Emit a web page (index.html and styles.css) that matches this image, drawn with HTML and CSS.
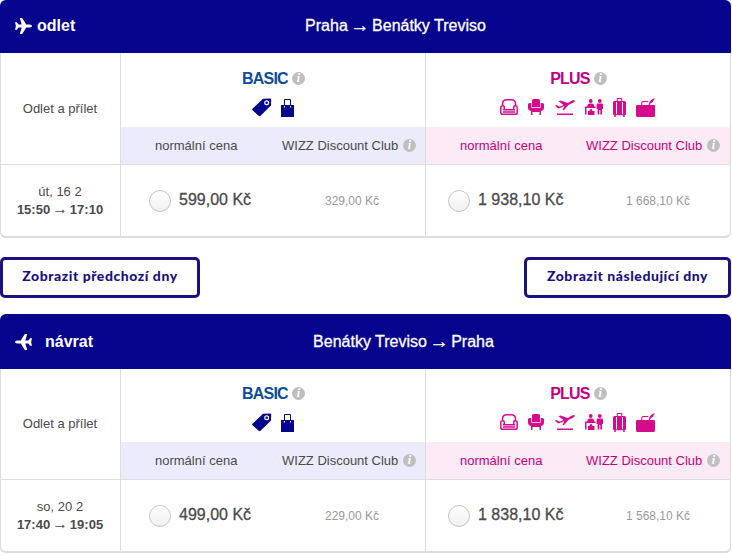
FILE: index.html
```html
<!DOCTYPE html>
<html lang="cs">
<head>
  <meta charset="UTF-8" />
  <meta name="viewport" content="width=device-width, initial-scale=1.0"/>
  <title>Výběr letu</title>
  <link rel="stylesheet" href="styles.css">
</head>
<body>
  <svg width="0" height="0" class="sprite">
    <symbol id="plane" viewBox="0 0 18 17">
      <path d="M0 4.500h2l1.700 2.500h3.400L5 0h2.600l4.300 7h3.600c1.500 0 2.500.8 2.500 1.500s-1 1.500-2.500 1.500h-3.600l-4.300 7H5l2.100-7H3.700L2 12.500H0l.9-4z"/>
    </symbol>
    <symbol id="tag" viewBox="0 0 20 19">
      <path fill-rule="evenodd" d="M11 .8 18 .5q1.300 0 1.200 1.300L19 7.500 8.500 17.800q-.9.800-1.900 0L.6 12.300q-.9-.9.100-1.800zM14.700 2.200a2.500 2.500 0 1 0 0 5 2.500 2.500 0 0 0 0-5zm0 1.200a1.300 1.300 0 1 1 0 2.600 1.300 1.300 0 0 1 0-2.600z"/>
    </symbol>
    <symbol id="bag" viewBox="0 0 13 18">
      <path fill-rule="evenodd" d="M0 6h3V1q0-1 1-1h5q1 0 1 1v5h3v12H0zM4 1v5h5V1zM3 7v1.500h1V7zM9 7v1.500h1V7z"/>
    </symbol>
    <symbol id="sofa" viewBox="0 0 18 16">
      <path fill="none" stroke="currentColor" stroke-width="1.500" d="M2.500 6.500V5Q2.500.8 7 .8h4q4.500 0 4.500 4.200v1.500M4.300 11V8.500Q4.200 6.600 2.400 6.600.8 6.700.8 8.600v4.800q0 1.800 1.800 1.800h12.800q1.800 0 1.800-1.800V8.600q0-1.900-1.600-2-1.800 0-1.900 1.900V11M3 10.800h12M3 13h12"/>
    </symbol>
    <symbol id="seat" viewBox="0 0 16 16">
      <path d="M4 1.500Q4 0 5.500 0h5Q12 0 12 1.500V8H4zM0 5.500Q0 4 1.500 4H3.300v4.700h9.400V4h1.800Q16 4 16 5.500v3Q16 11.500 13 12v4h-1.500v-3h-7v3H3v-4Q0 11.500 0 8.500z"/>
    </symbol>
    <symbol id="takeoff" viewBox="0 0 20 16">
      <path d="M0 6.500 1.500 6l3 1.700 4-1.700L3.500 2.200l2-.7 7.200 2.500L17 1.500q2.500-1 2.800.2.200 1-2.300 2.300l-4 2L9 11H7.500l2-4-4.500 2Q3.500 9.500 2.500 9zM2 14.500h16V16H2z"/>
    </symbol>
    <symbol id="desk" viewBox="0 0 18 16">
      <circle cx="5.700" cy="2" r="1.900"/>
      <circle cx="14.800" cy="2" r="1.900"/>
      <path d="M2.300 7.500Q2.300 4.500 5 4.500h1.500Q9.200 4.500 9.200 7.500h1.300V9h-9v6.500H0v-8zM3 12h1.500q0-2 1.500-2t1.500 2H9.500v4H3zM12.700 4.500h4.200q1.100 0 1.100 1.300V10h-1v5.500h-1.700V11h-1v4.500h-1.700V10h-1V5.800q0-1.300 1.100-1.300z"/>
    </symbol>
    <symbol id="suitcase" viewBox="0 0 13 19">
      <path fill-rule="evenodd" d="M1.500 3H3.700V1.300Q3.700 0 5 0h3q1.300 0 1.300 1.300V3h2.200Q13 3 13 4.500v11q0 1.500-1.300 1.700V19h-1.500v-1.700H2.800V19H1.300v-1.800Q0 17 0 15.500v-11Q0 3 1.500 3zM4.800 1v2h3.400V1zM3 4v12.300h1V4zm6 0v12.300h1V4z"/>
    </symbol>
    <symbol id="holdall" viewBox="0 0 20 19">
      <path fill-rule="evenodd" d="M1.200 7H5.200V5Q5.200 3 7.200 3h4.600l1 1H7.500q-1.200 0-1.200 1.200V7h6.200l1-3 2-2.500L17 1l1-1 .7.700-1 1.200-.7 1.800-2.300 1.500-.9 1.800h4q1.200 0 1.200 1.200v9.300Q19 19 17.500 19h-16Q0 19 0 17.500V8.200Q0 7 1.200 7z"/>
    </symbol>
  </svg>

  <section class="flight">
    <div class="flight-header">
      <div class="direction"><svg class="plane"><use href="#plane"/></svg>odlet</div>
      <div class="route">Praha <span class="arrow">→</span> Benátky Treviso</div>
    </div>
    <div class="row row-head">
      <div class="times">Odlet a přílet</div>
      <div class="fare basic">
        <div class="fare-name"><b>BASIC</b><i class="info">i</i></div>
        <div class="icons">
          <svg class="i-tag"><use href="#tag"/></svg>
          <svg class="i-bag"><use href="#bag"/></svg>
        </div>
        <div class="fare-types"><span class="normal">normální cena</span><span class="club">WIZZ Discount Club</span><i class="info">i</i></div>
      </div>
      <div class="fare plus">
        <div class="fare-name"><b>PLUS</b><i class="info">i</i></div>
        <div class="icons">
          <svg class="i-sofa"><use href="#sofa"/></svg>
          <svg class="i-seat"><use href="#seat"/></svg>
          <svg class="i-takeoff"><use href="#takeoff"/></svg>
          <svg class="i-desk"><use href="#desk"/></svg>
          <svg class="i-suitcase"><use href="#suitcase"/></svg>
          <svg class="i-holdall"><use href="#holdall"/></svg>
        </div>
        <div class="fare-types"><span class="normal">normální cena</span><span class="club">WIZZ Discount Club</span><i class="info">i</i></div>
      </div>
    </div>
    <div class="row row-price">
      <div class="times"><span>út, 16 2</span><strong>15:50 <span class="arrow">→</span> 17:10</strong></div>
      <div class="price"><span class="radio"></span><span class="amount">599,00 Kč</span><span class="discount">329,00 Kč</span></div>
      <div class="price price-plus"><span class="radio"></span><span class="amount">1 938,10 Kč</span><span class="discount">1 668,10 Kč</span></div>
    </div>
  </section>

  <div class="day-nav">
    <button class="prev">Zobrazit předchozí dny</button>
    <button class="next">Zobrazit následující dny</button>
  </div>

  <section class="flight return">
    <div class="flight-header">
      <div class="direction"><svg class="plane"><use href="#plane"/></svg>návrat</div>
      <div class="route">Benátky Treviso <span class="arrow">→</span> Praha</div>
    </div>
    <div class="row row-head">
      <div class="times">Odlet a přílet</div>
      <div class="fare basic">
        <div class="fare-name"><b>BASIC</b><i class="info">i</i></div>
        <div class="icons">
          <svg class="i-tag"><use href="#tag"/></svg>
          <svg class="i-bag"><use href="#bag"/></svg>
        </div>
        <div class="fare-types"><span class="normal">normální cena</span><span class="club">WIZZ Discount Club</span><i class="info">i</i></div>
      </div>
      <div class="fare plus">
        <div class="fare-name"><b>PLUS</b><i class="info">i</i></div>
        <div class="icons">
          <svg class="i-sofa"><use href="#sofa"/></svg>
          <svg class="i-seat"><use href="#seat"/></svg>
          <svg class="i-takeoff"><use href="#takeoff"/></svg>
          <svg class="i-desk"><use href="#desk"/></svg>
          <svg class="i-suitcase"><use href="#suitcase"/></svg>
          <svg class="i-holdall"><use href="#holdall"/></svg>
        </div>
        <div class="fare-types"><span class="normal">normální cena</span><span class="club">WIZZ Discount Club</span><i class="info">i</i></div>
      </div>
    </div>
    <div class="row row-price">
      <div class="times"><span>so, 20 2</span><strong>17:40 <span class="arrow">→</span> 19:05</strong></div>
      <div class="price"><span class="radio"></span><span class="amount">499,00 Kč</span><span class="discount">229,00 Kč</span></div>
      <div class="price price-plus"><span class="radio"></span><span class="amount">1 838,10 Kč</span><span class="discount">1 568,10 Kč</span></div>
    </div>
  </section>
</body>
</html>
```
FILE: styles.css
```css
* {
  box-sizing: border-box;
}

body {
  margin: 0;
  background: #fff;
  color: #4a4a4a;
  font-family: "Liberation Sans", Arial, sans-serif;
  font-size: 13px;
  overflow: hidden;
}

.sprite {
  display: block;
}

svg {
  flex: none;
  fill: currentColor;
}

.flight {
  width: 731px;
  border-radius: 6px;
  overflow: hidden;
  box-shadow: inset 0 0 0 1px #ddd, inset 0 -2px 0 #ddd;
}

.flight-header {
  display: flex;
  align-items: center;
  height: 53px;
  padding: 0 0 2px 15px;
  background: #06038d;
  color: #fff;
  font-size: 16px;
}

.direction {
  display: flex;
  align-items: center;
  width: 106px;
  gap: 5px;
  font-weight: bold;
}

.plane {
  width: 17px;
  height: 16px;
}

.route {
  width: 549px;
  text-align: center;
  -webkit-text-stroke: 0.3px #fff;
}

.arrow {
  margin: 0 -0.1em;
  font-size: 1.2em;
  font-weight: normal;
  line-height: 0;
  vertical-align: -1px;
}

.row {
  display: grid;
  grid-template-columns: 121px 305px 305px;
}

.row > div {
  border-right: 1px solid #ddd;
}

.row-head {
  height: 112px;
  border-bottom: 1px solid #ddd;
}

.row-price {
  height: 73px;
}

.times {
  display: flex;
  flex-direction: column;
  align-items: center;
  justify-content: center;
  line-height: 18px;
}

.row-price .times {
  padding-bottom: 1px;
}

.times .arrow {
  vertical-align: 0;
}

.fare {
  display: flex;
  flex-direction: column;
  align-items: center;
}

.fare-name {
  display: flex;
  align-items: center;
  gap: 4px;
  height: 18px;
  margin-top: 16px;
  padding-left: 1px;
  font-size: 16px;
}

.fare-name b {
  padding-top: 1px;
  letter-spacing: -0.8px;
}

.info {
  display: flex;
  flex: none;
  align-items: center;
  justify-content: center;
  width: 13px;
  height: 13px;
  border-radius: 50%;
  background: #bfbfbf;
  color: #fff;
  font: italic bold 12px "Liberation Serif", serif;
}

.icons {
  display: flex;
  align-items: center;
  height: 19px;
  margin-top: 11px;
}

.basic {
  color: #06038d;
}

.basic .fare-name {
  color: #0f4c97;
}

.plus {
  color: #d60b8c;
}

.plus .fare-name,
.plus .fare-types {
  color: #c6007e;
}

.i-tag { width: 20px; height: 19px; margin-right: 9px; }
.i-bag { width: 13px; height: 18px; }
.i-sofa { width: 18px; height: 16px; margin: 0 10px 1px 0; }
.i-seat { width: 16px; height: 16px; margin: 0 11px 1px 0; }
.i-takeoff { width: 20px; height: 16px; margin: 0 10px 1px 0; }
.i-desk { width: 18px; height: 16px; margin: 0 10px 1px 0; }
.i-suitcase { width: 13px; height: 19px; margin-right: 10px; }
.i-holdall { width: 20px; height: 19px; }

.fare-types {
  display: flex;
  align-items: center;
  width: 100%;
  height: 37px;
  margin-top: auto;
  padding-left: 34px;
  background: #ebebfb;
  color: #4a4a4a;
}

.plus .fare-types {
  background: #fcebf5;
}

.fare-types .normal {
  width: 127px;
}

.fare-types .club {
  width: 121px;
}

.plus .normal {
  width: 126px;
}

.price {
  display: flex;
  align-items: center;
  padding: 0 0 2px 28px;
}

.price-plus {
  padding-left: 22px;
}

.radio {
  width: 22px;
  height: 22px;
  margin-right: 8px;
  border: 1px solid #c4c4c4;
  border-radius: 50%;
  background: linear-gradient(#fff, #f0f0f0);
}

.amount {
  width: 128px;
  padding-bottom: 2px;
  font-size: 16px;
  -webkit-text-stroke: 0.3px #4a4a4a;
}

.price-plus .amount {
  width: 135px;
}

.discount {
  width: 90px;
  color: #999;
  font-size: 12px;
  text-align: center;
}

.day-nav {
  display: flex;
  justify-content: space-between;
  width: 731px;
  padding: 19px 0 16px;
}

.day-nav button {
  height: 41px;
  padding: 0 0 4px;
  border: 3px solid #1b1181;
  border-radius: 5px;
  background: #fff;
  color: #1b1181;
  font: 900 14px Lato, sans-serif;
  letter-spacing: 0.55px;
}

.day-nav .prev {
  width: 200px;
}

.day-nav .next {
  width: 207px;
}

/* return flight */
.return .flight-header {
  height: 55px;
  padding-bottom: 0;
}

.return .direction {
  width: 114px;
  gap: 13px;
}

.return .plane {
  transform: scaleX(-1);
}

.return .row-head {
  height: 111px;
}

.return .fare-name {
  margin-top: 15px;
}
```
